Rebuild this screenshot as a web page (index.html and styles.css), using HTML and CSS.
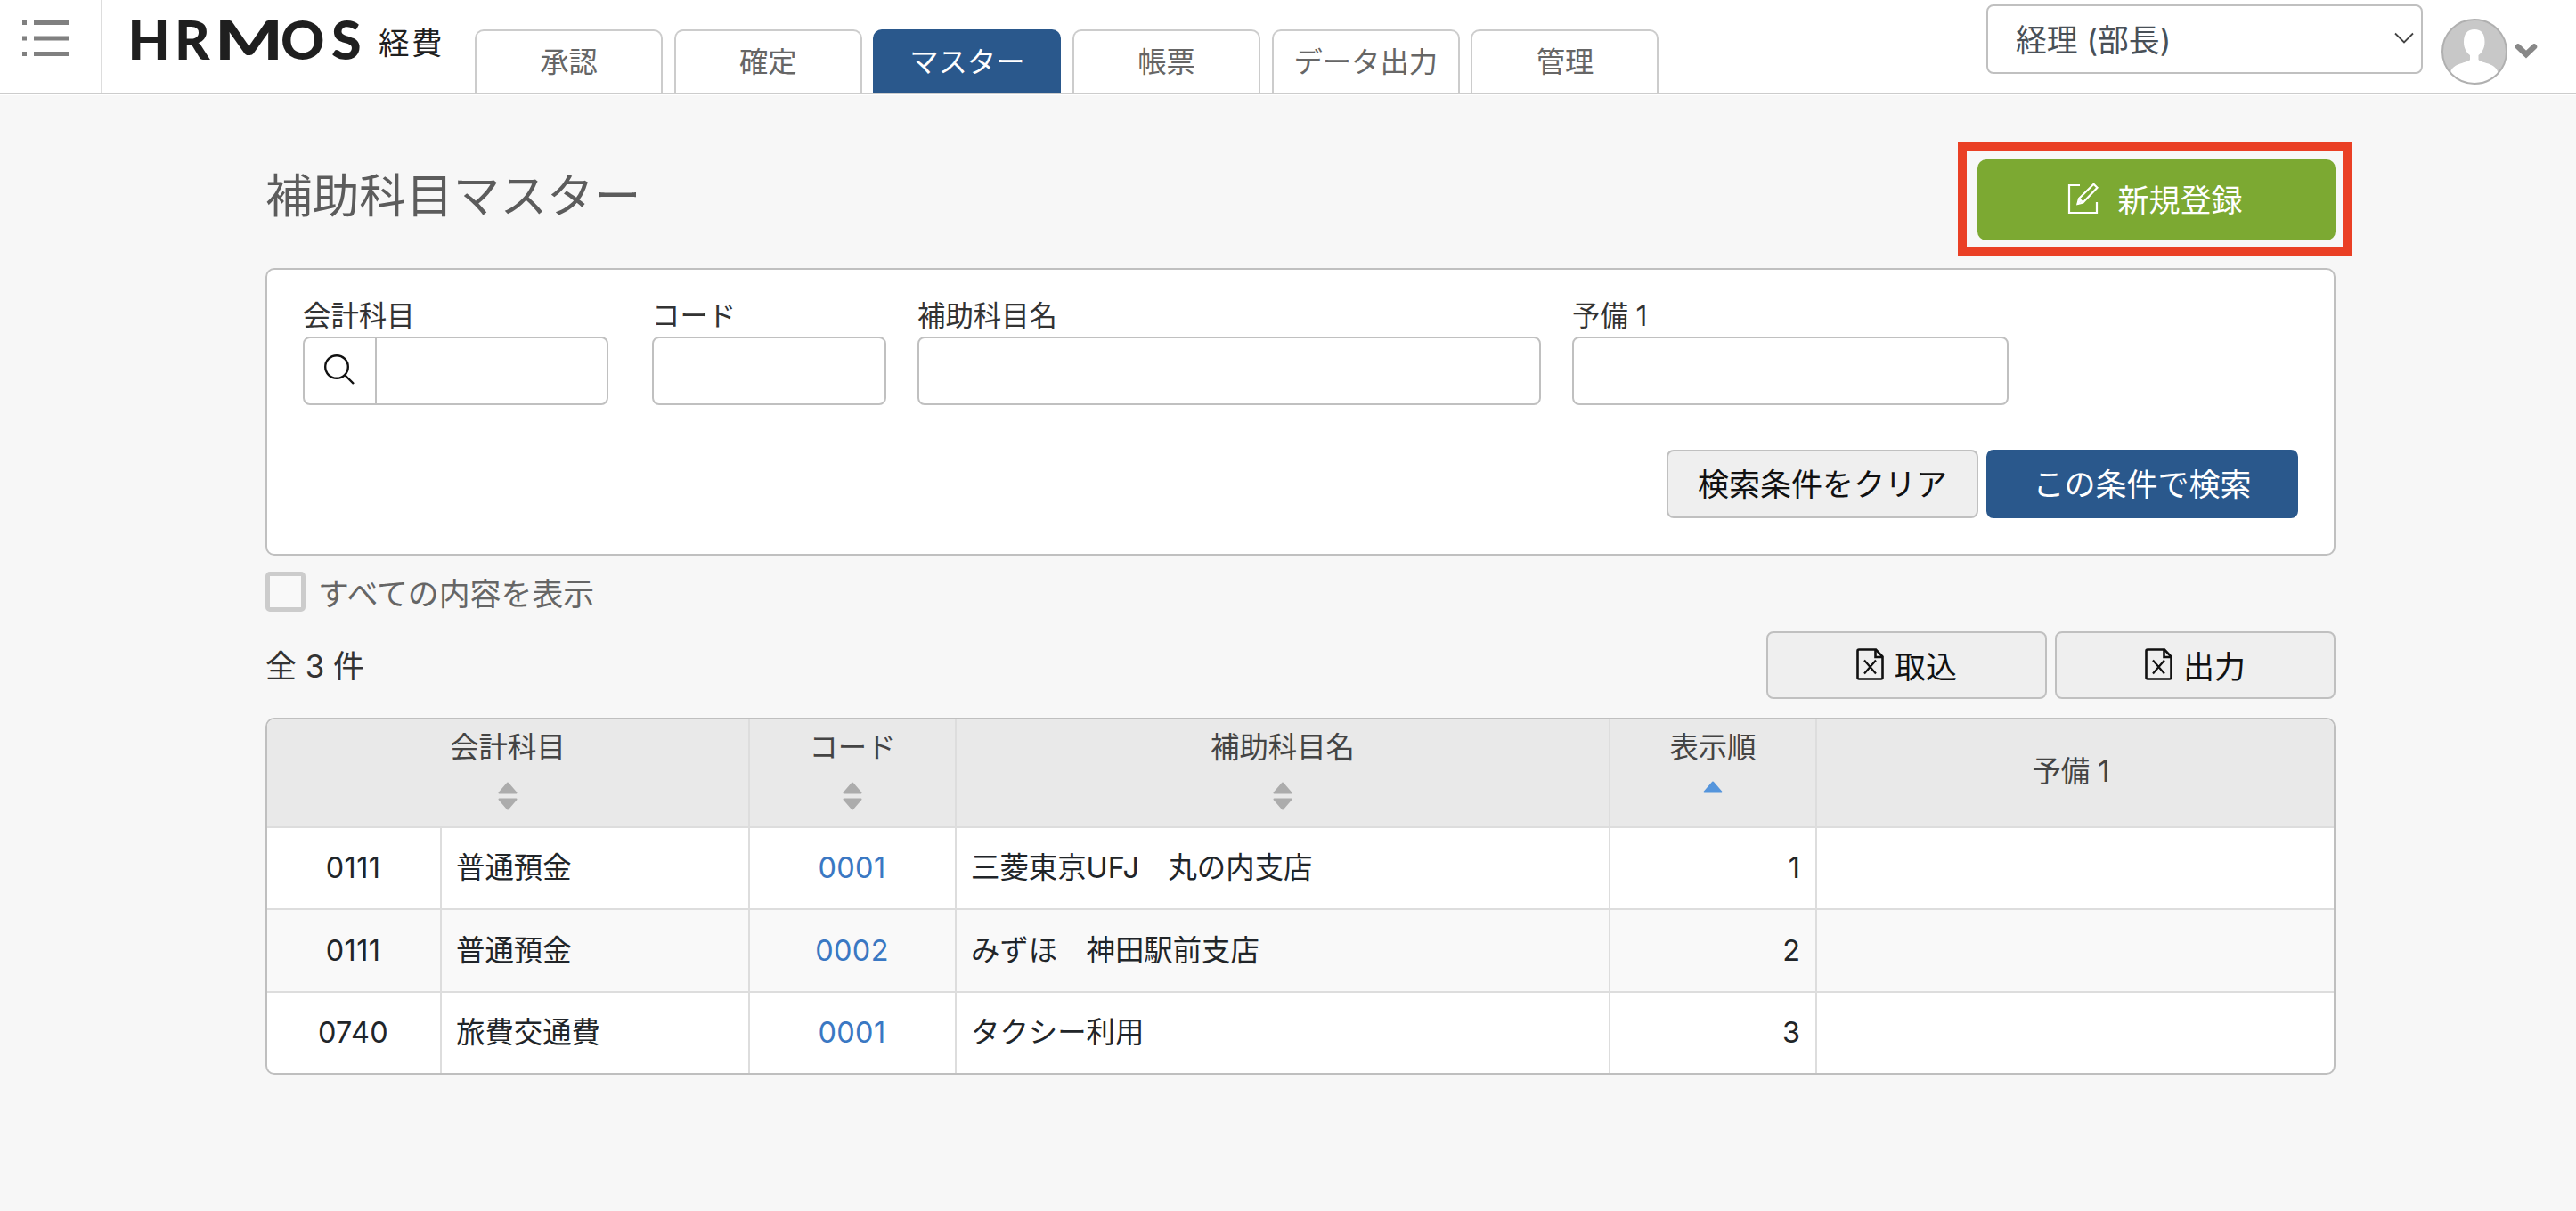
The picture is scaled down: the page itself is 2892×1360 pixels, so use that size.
FILE: index.html
```html
<!DOCTYPE html>
<html lang="ja">
<head>
    <meta charset="UTF-8">
    <meta name="viewport" content="width=device-width, initial-scale=1.0">
    <title>補助科目マスター</title>
    <link rel="stylesheet" href="styles.css">
</head>
<body>
    <header class="header">
        <div class="menu">
            <svg width="53" height="40" viewBox="0 0 53 40" fill="#808080">
                <path d="M0 0h5v5H0zM13 0h40v5H13zM0 17.5h5v5H0zM13 17.5h40v5H13zM0 35h5v5H0zM13 35h40v5H13z"/>
            </svg>
        </div>
        <div class="logo">
            <svg class="logo-name" width="280" height="76" viewBox="-10 -10 280 76">
                <text y="50.5"><tspan x="-4.5">H</tspan><tspan x="48">R</tspan><tspan x="93" textLength="77" lengthAdjust="spacingAndGlyphs">M</tspan><tspan x="167">O</tspan><tspan x="224">S</tspan></text>
            </svg>
            <span class="logo-sub">経費</span>
        </div>
        <nav class="tabs">
            <a class="tab">承認</a>
            <a class="tab">確定</a>
            <a class="tab active">マスター</a>
            <a class="tab">帳票</a>
            <a class="tab">データ出力</a>
            <a class="tab">管理</a>
        </nav>
        <div class="user">
            <div class="select">
                <span>経理 (部長)</span>
                <svg width="22" height="14" viewBox="0 0 22 14" fill="none" stroke="#444" stroke-width="1.8"><path d="M1 1.5l10 10 10-10"/></svg>
            </div>
            <svg class="avatar" width="74" height="74" viewBox="0 0 74 74">
                <clipPath id="face"><circle cx="37" cy="37" r="36"/></clipPath>
                <circle cx="37" cy="37" r="36" fill="#c8c8c8"/>
                <g clip-path="url(#face)" fill="#fff">
                    <path d="M37 12c8 0 11.500 5 11.500 14 0 7-3 12-7 15v5c2 4 20 3 22 15v15H10V61c2-12 20-11 22-15v-5c-4-3-7-8-7-15 0-9 4-14 12-14z"/>
                </g>
                <circle cx="37" cy="37" r="36" fill="none" stroke="#b0b0b0" stroke-width="2"/>
            </svg>
            <svg class="caret" width="26" height="18" viewBox="0 0 26 18" fill="none" stroke="#888" stroke-width="6.500" stroke-linecap="round"><path d="M4 4.500l9 8.500 9-8.500"/></svg>
        </div>
    </header>

    <main class="main">
        <div class="page-head">
            <h1>補助科目マスター</h1>
            <div class="highlight">
                <button class="btn-new">
                    <svg width="36" height="36" viewBox="0 0 36 36" fill="none" stroke="#fff" stroke-width="2.200">
                        <path d="M14 3H2v31h31V22"/>
                        <path d="M29.500 1.800l4 4L17.500 22.500l-6 1.500 1.500-6z"/>
                        <path d="M13 18l4.500 4.500M11.500 24l3-3.500"/>
                    </svg>
                    新規登録
                </button>
            </div>
        </div>

        <form class="search">
            <div class="fields">
                <div class="field account">
                    <label>会計科目</label>
                    <div class="input-group">
                        <span class="lens">
                            <svg width="34" height="34" viewBox="0 0 34 34" fill="none" stroke="#111" stroke-width="2.400"><circle cx="14" cy="14" r="12.800"/><path d="M23 23l10 10"/></svg>
                        </span>
                        <input type="text">
                    </div>
                </div>
                <div class="field code">
                    <label>コード</label>
                    <input type="text">
                </div>
                <div class="field name">
                    <label>補助科目名</label>
                    <input type="text">
                </div>
                <div class="field spare">
                    <label>予備 1</label>
                    <input type="text">
                </div>
            </div>
            <div class="actions">
                <button type="button" class="btn wide">検索条件をクリア</button>
                <button type="button" class="btn wide primary">この条件で検索</button>
            </div>
        </form>

        <label class="show-all"><span class="checkbox"></span>すべての内容を表示</label>

        <div class="toolbar">
            <div class="count">全 3 件</div>
            <button class="btn">
                <svg width="31" height="36" viewBox="0 0 31 36" fill="none" stroke="#111" stroke-width="2.600"><path d="M3 1.500h19l7.500 8V33q0 1.500-1.500 1.500H3Q1.500 34.500 1.500 33V3Q1.500 1.500 3 1.500z"/><path d="M21.500 2v8H29"/><path d="M9 13.500l13 15M22 13.500l-13 15" stroke-width="2.200"/></svg>
                取込
            </button>
            <button class="btn">
                <svg width="31" height="36" viewBox="0 0 31 36" fill="none" stroke="#111" stroke-width="2.600"><path d="M3 1.500h19l7.500 8V33q0 1.500-1.500 1.500H3Q1.500 34.500 1.500 33V3Q1.500 1.500 3 1.500z"/><path d="M21.500 2v8H29"/><path d="M9 13.500l13 15M22 13.500l-13 15" stroke-width="2.200"/></svg>
                出力
            </button>
        </div>

        <div class="table-wrap">
            <table>
                <colgroup>
                    <col class="c-account">
                    <col class="c-account-name">
                    <col class="c-code">
                    <col class="c-name">
                    <col class="c-order">
                    <col>
                </colgroup>
                <thead>
                    <tr>
                        <th colspan="2">会計科目
                            <svg class="sort" width="22" height="32" viewBox="0 0 22 32"><path d="M11 1.500L20.500 12.500H1.500zM1.500 19.500h19L11 30.500z"/></svg>
                        </th>
                        <th>コード
                            <svg class="sort" width="22" height="32" viewBox="0 0 22 32"><path d="M11 1.500L20.500 12.500H1.500zM1.500 19.500h19L11 30.500z"/></svg>
                        </th>
                        <th>補助科目名
                            <svg class="sort" width="22" height="32" viewBox="0 0 22 32"><path d="M11 1.500L20.500 12.500H1.500zM1.500 19.500h19L11 30.500z"/></svg>
                        </th>
                        <th>表示順
                            <svg class="sort asc" width="22" height="14" viewBox="0 0 22 14"><path d="M11 1.500L20.500 12.500H1.500z"/></svg>
                        </th>
                        <th class="plain">予備 1</th>
                    </tr>
                </thead>
                <tbody>
                    <tr>
                        <td class="center">0111</td>
                        <td>普通預金</td>
                        <td class="center"><a>0001</a></td>
                        <td>三菱東京UFJ　丸の内支店</td>
                        <td class="right">1</td>
                        <td></td>
                    </tr>
                    <tr class="even">
                        <td class="center">0111</td>
                        <td>普通預金</td>
                        <td class="center"><a>0002</a></td>
                        <td>みずほ　神田駅前支店</td>
                        <td class="right">2</td>
                        <td></td>
                    </tr>
                    <tr class="last">
                        <td class="center">0740</td>
                        <td>旅費交通費</td>
                        <td class="center"><a>0001</a></td>
                        <td>タクシー利用</td>
                        <td class="right">3</td>
                        <td></td>
                    </tr>
                </tbody>
            </table>
        </div>
    </main>
</body>
</html>
```
FILE: styles.css
```css
* {
    box-sizing: border-box;
}
body {
    margin: 0;
    background-color: #f7f7f7;
    color: #333;
    font-family: Inter, "Noto Sans CJK JP", sans-serif;
    font-size: 32px;
}
svg {
    display: block;
    flex: none;
}
button, input {
    font-family: inherit;
}

/* header */
.header {
    display: flex;
    height: 106px;
    background-color: #fff;
    border-bottom: 2px solid #ccc;
    box-shadow: 0 1px 0 #fff;
}
.menu {
    width: 115px;
    padding: 23px 0 0 25px;
    border-right: 2px solid #ddd;
}
.logo {
    display: flex;
    width: 418px;
    padding: 6px 0 0 23px;
}
.logo-name {
    font-family: Lato, sans-serif;
    font-size: 61px;
    font-weight: 900;
    fill: #1f1f1f;
}
.logo-sub {
    margin-left: 7px;
    color: #1f1f1f;
    font-size: 34.5px;
    line-height: 86px;
    letter-spacing: 2.5px;
}
.tabs {
    display: flex;
    gap: 12.7px;
    padding-top: 33px;
}
.tab {
    width: 211px;
    border: 2px solid #ccc;
    border-bottom: none;
    border-radius: 10px 10px 0 0;
    color: #666;
    font-size: 32.3px;
    line-height: 69px;
    text-align: center;
}
.tab.active {
    background-color: #2a588c;
    border-color: #2a588c;
    color: #fff;
}
.user {
    display: flex;
    margin-left: auto;
    padding-right: 43px;
}
.select {
    display: flex;
    align-items: center;
    justify-content: space-between;
    width: 490px;
    height: 78px;
    margin-top: 5px;
    padding: 0 8px 2px 31px;
    border: 2px solid #c0c0c0;
    border-radius: 8px;
    color: #495057;
    font-size: 34.8px;
}
.avatar {
    margin: 21px 8px 0 21px;
}
.caret {
    margin-top: 48px;
}

/* page */
.main {
    width: 2324px;
    margin-left: 298px;
    padding-top: 54px;
}
.page-head {
    display: flex;
    justify-content: space-between;
    height: 127px;
    margin-right: -18px;
}
h1 {
    margin: 0;
    color: #5c5c5c;
    font-size: 52.7px;
    font-weight: 400;
    line-height: 121px;
}
.highlight {
    width: 442px;
    padding: 9px 8px 7px 12px;
    border: 10px solid #ea4025;
}
.btn-new {
    display: flex;
    align-items: center;
    justify-content: center;
    gap: 20px;
    width: 402px;
    height: 91px;
    padding: 0 3px 4px 0;
    background-color: #7ca932;
    border: none;
    border-radius: 10px;
    color: #fff;
    font-size: 35px;
}
.search {
    height: 323px;
    margin-top: 14px;
    padding: 30px 40px;
    background-color: #fff;
    border: 2px solid #c0c0c0;
    border-radius: 10px;
}
.fields {
    display: flex;
}
.field label {
    display: block;
    font-size: 31.4px;
    line-height: 45px;
}
.field input {
    display: block;
    width: 100%;
    height: 77px;
    background-color: #fff;
    border: 2px solid #c0c0c0;
    border-radius: 8px;
}
.account {
    width: 343px;
    margin-right: 49px;
}
.code {
    width: 263px;
    margin-right: 35px;
}
.name {
    width: 700px;
    margin-right: 35px;
}
.spare {
    width: 490px;
}
.input-group {
    display: flex;
    height: 77px;
    border: 2px solid #c0c0c0;
    border-radius: 8px;
}
.field .input-group input {
    flex: 1;
    height: 73px;
    min-width: 0;
    border: none;
}
.lens {
    width: 81px;
    padding: 18px 0 0 22px;
    border-right: 2px solid #c0c0c0;
}
.actions {
    display: flex;
    justify-content: flex-end;
    gap: 9px;
    margin-top: 50px;
}
.btn {
    display: flex;
    align-items: center;
    justify-content: center;
    gap: 12px;
    width: 315px;
    height: 76px;
    padding: 0 0 2px;
    background-color: #efefef;
    border: 2px solid #c0c0c0;
    border-radius: 8px;
    color: #111;
    font-size: 35px;
}
.btn.wide {
    width: 350px;
    height: 77px;
    padding-bottom: 4px;
}
.btn.primary {
    background-color: #2a588c;
    border-color: #2a588c;
    color: #fff;
}
.show-all {
    display: flex;
    align-items: center;
    gap: 14px;
    height: 45px;
    margin-top: 18px;
    color: #666;
    font-size: 34.9px;
}
.checkbox {
    width: 45px;
    height: 45px;
    background-color: #f9f9f9;
    border: 5px solid #ccc;
    border-radius: 5px;
}
.toolbar {
    display: flex;
    align-items: center;
    gap: 9px;
    margin-top: 22px;
}
.count {
    margin-right: auto;
    padding-bottom: 2px;
    font-size: 34.9px;
}

/* table */
.table-wrap {
    margin-top: 21px;
    background-color: #fff;
    border: 2px solid #bfbfbf;
    border-radius: 10px;
    overflow: hidden;
}
table {
    width: 100%;
    border-collapse: separate;
    border-spacing: 0;
    table-layout: fixed;
    font-size: 32.4px;
}
.c-account {
    width: 196px;
}
.c-account-name {
    width: 346px;
}
.c-code {
    width: 232px;
}
.c-name {
    width: 734px;
}
.c-order {
    width: 232px;
}
th {
    height: 122px;
    padding: 8px 0 0;
    background-color: #e9e9e9;
    border-right: 2px solid #ddd;
    border-bottom: 2px solid #ddd;
    color: #444;
    font-weight: 400;
    line-height: 48px;
    vertical-align: top;
}
th.plain {
    padding: 0 10px 2px 0;
    vertical-align: middle;
}
.sort {
    margin: 14px auto 0;
    fill: #acacac;
    stroke: #acacac;
    stroke-width: 2;
    stroke-linejoin: round;
}
.sort.asc {
    margin-top: 13px;
    fill: #5595dc;
    stroke: #5595dc;
}
td {
    height: 92px;
    padding: 0 17px 0 16px;
    border-right: 2px solid #ddd;
    border-bottom: 2px solid #ddd;
    color: #212529;
    line-height: 48px;
    white-space: nowrap;
}
th:last-child, td:last-child {
    border-right: none;
}
.even td {
    height: 93px;
    background-color: #f9f9f9;
}
.last td {
    height: 90px;
    border-bottom: none;
}
.center {
    letter-spacing: 0.4px;
    text-align: center;
}
.right {
    text-align: right;
}
td a {
    color: #3a78c3;
}
```
